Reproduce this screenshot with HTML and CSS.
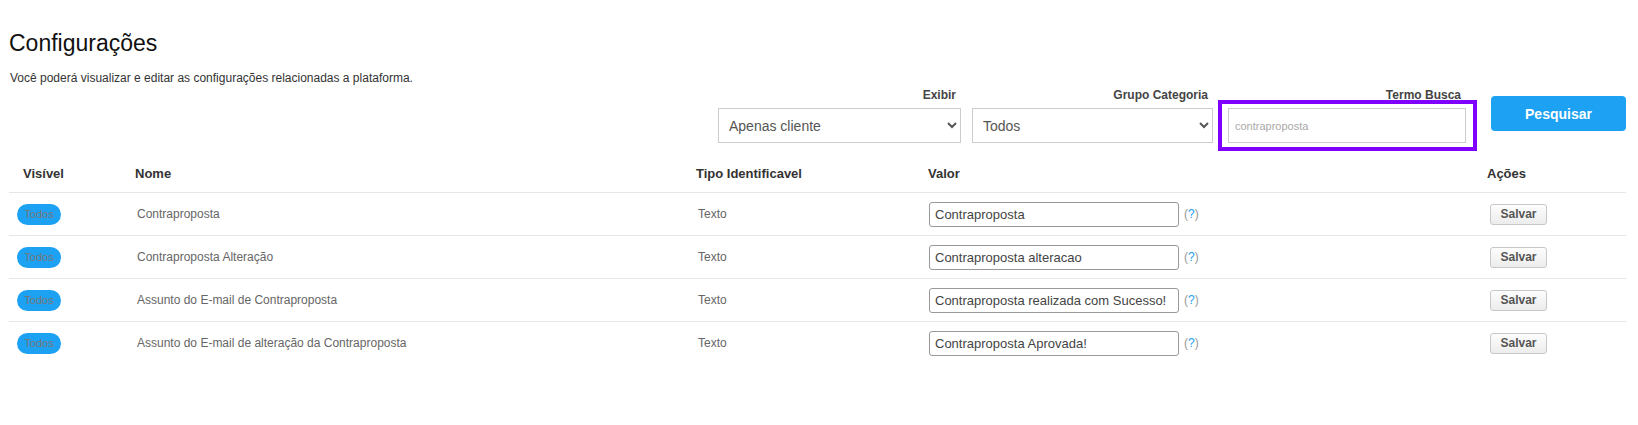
FILE: index.html
```html
<!DOCTYPE html>
<html lang="pt-BR">
<head>
    <meta charset="UTF-8">
    <meta name="viewport" content="width=device-width, initial-scale=1.0">
    <title>Configurações</title>
    <link rel="stylesheet" href="styles.css">
</head>
<body>
    <div class="page">
        <h1>Configurações</h1>
        <p class="sub">Você poderá visualizar e editar as configurações relacionadas a plataforma.</p>

        <div class="filters">
            <div class="field f1">
                <label>Exibir</label>
                <select>
                    <option>Apenas cliente</option>
                </select>
            </div>
            <div class="field f2">
                <label>Grupo Categoria</label>
                <select>
                    <option>Todos</option>
                </select>
            </div>
            <div class="field f3">
                <label>Termo Busca</label>
                <div class="search-wrap">
                    <input type="text" class="search" placeholder="contraproposta">
                </div>
            </div>
            <button class="btn-search">Pesquisar</button>
        </div>

        <div class="grid">
            <div class="row head">
                <div class="c c1">Visível</div>
                <div class="c">Nome</div>
                <div class="c">Tipo Identificavel</div>
                <div class="c">Valor</div>
                <div class="c">Ações</div>
            </div>
            <div class="row">
                <div class="c c1"><span class="pill">Todos</span></div>
                <div class="c">Contraproposta</div>
                <div class="c">Texto</div>
                <div class="c val"><input type="text" value="Contraproposta"><span class="help">(<b>?</b>)</span></div>
                <div class="c act"><button class="btn-save">Salvar</button></div>
            </div>
            <div class="row">
                <div class="c c1"><span class="pill">Todos</span></div>
                <div class="c">Contraproposta Alteração</div>
                <div class="c">Texto</div>
                <div class="c val"><input type="text" value="Contraproposta alteracao"><span class="help">(<b>?</b>)</span></div>
                <div class="c act"><button class="btn-save">Salvar</button></div>
            </div>
            <div class="row">
                <div class="c c1"><span class="pill">Todos</span></div>
                <div class="c">Assunto do E-mail de Contraproposta</div>
                <div class="c">Texto</div>
                <div class="c val"><input type="text" value="Contraproposta realizada com Sucesso!"><span class="help">(<b>?</b>)</span></div>
                <div class="c act"><button class="btn-save">Salvar</button></div>
            </div>
            <div class="row">
                <div class="c c1"><span class="pill">Todos</span></div>
                <div class="c">Assunto do E-mail de alteração da Contraproposta</div>
                <div class="c">Texto</div>
                <div class="c val"><input type="text" value="Contraproposta Aprovada!"><span class="help">(<b>?</b>)</span></div>
                <div class="c act"><button class="btn-save">Salvar</button></div>
            </div>
        </div>
    </div>
</body>
</html>
```

FILE: styles.css
```css
body {
    margin: 0;
    font-family: "Liberation Sans", Arial, sans-serif;
    background-color: #fff;
    color: #333;
}
.page {
    padding: 0 12px 0 9px;
}
h1 {
    font-size: 23px;
    font-weight: normal;
    line-height: 27px;
    color: #111;
    margin: 30px 0 0 0;
}
.sub {
    font-size: 12px;
    line-height: 14px;
    color: #333;
    margin: 14px 0 0 1px;
}
.filters {
    display: flex;
    justify-content: flex-end;
    align-items: flex-start;
    margin-top: 3px;
}
.field label {
    display: block;
    text-align: right;
    padding-right: 5px;
    font-size: 12px;
    font-weight: bold;
    line-height: 14px;
    color: #444;
    margin-bottom: 6px;
}
.f1 {
    width: 243px;
}
.f2 {
    width: 241px;
    margin-left: 11px;
}
.f3 {
    width: 238px;
    margin-left: 15px;
}
select {
    width: 100%;
    height: 35px;
    border: 1px solid #ccc;
    border-radius: 0;
    background-color: #fff;
    font-family: "Liberation Sans", Arial, sans-serif;
    font-size: 14px;
    color: #555;
    padding: 0 6px;
}
.search-wrap {
    position: relative;
}
.search-wrap::after {
    content: "";
    position: absolute;
    left: -10px;
    right: -11px;
    top: -8px;
    bottom: -8px;
    border: 4px solid #7f00ff;
    pointer-events: none;
}
.search {
    display: block;
    box-sizing: border-box;
    width: 238px;
    height: 35px;
    border: 1px solid #ccc;
    padding: 0 6px;
    font-family: "Liberation Sans", Arial, sans-serif;
    font-size: 11px;
    outline: none;
}
.search::placeholder {
    color: #aaa;
}
.btn-search {
    width: 135px;
    height: 35px;
    margin: 8px 0 0 25px;
    background-color: #1da1f2;
    color: #fff;
    border: none;
    border-radius: 4px;
    font-family: "Liberation Sans", Arial, sans-serif;
    font-size: 14px;
    font-weight: bold;
}
.grid {
    margin-top: 12px;
}
.row {
    display: grid;
    grid-template-columns: 118px 561px 232px 559px 147px;
    align-items: center;
    height: 42px;
    border-bottom: 1px solid #e6e6e6;
    font-size: 12px;
    color: #666;
}
.row:last-child {
    border-bottom: none;
}
.row.head {
    height: 37px;
    font-size: 13px;
    font-weight: bold;
    color: #333;
}
.row .c {
    padding-left: 10px;
}
.row.head .c {
    padding-left: 8px;
}
.row .c1 {
    padding-left: 8px;
}
.row.head .c1 {
    padding-left: 14px;
}
.row .val {
    padding-left: 9px;
    display: flex;
    align-items: center;
}
.row .act {
    padding-left: 11px;
}
.pill {
    display: inline-block;
    width: 44px;
    height: 21px;
    line-height: 21px;
    border-radius: 11px;
    background-color: #1da1f2;
    color: #777;
    font-size: 11px;
    text-align: center;
    vertical-align: middle;
}
.val input {
    box-sizing: border-box;
    width: 250px;
    height: 25px;
    border: 1px solid #999;
    border-radius: 3px;
    padding: 0 5px;
    font-family: "Liberation Sans", Arial, sans-serif;
    font-size: 13px;
    color: #444;
}
.help {
    margin-left: 5px;
    font-size: 12px;
    color: #999;
}
.help b {
    font-weight: normal;
    color: #1da1f2;
}
.btn-save {
    width: 57px;
    height: 21px;
    padding: 0;
    background: linear-gradient(#fdfdfd, #ececec);
    border: 1px solid #c8c8c8;
    border-radius: 3px;
    font-family: "Liberation Sans", Arial, sans-serif;
    font-size: 12px;
    font-weight: bold;
    color: #555;
    vertical-align: middle;
}
```
